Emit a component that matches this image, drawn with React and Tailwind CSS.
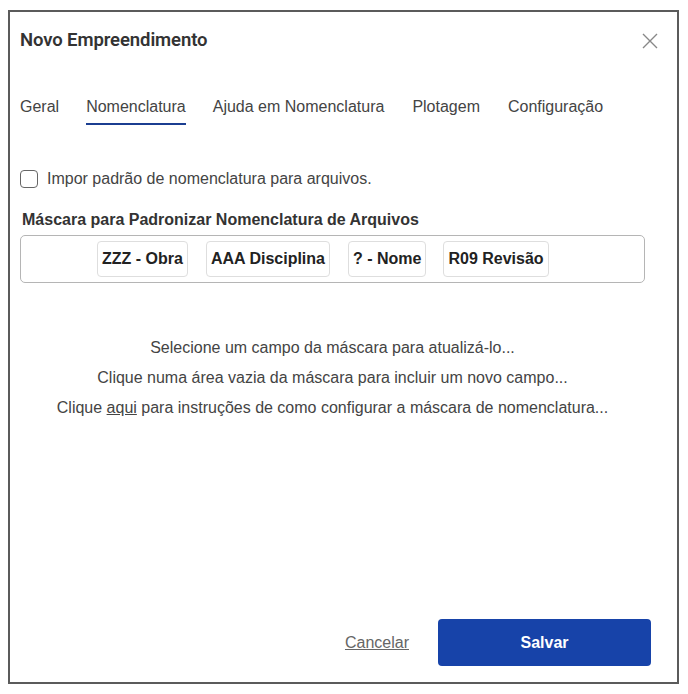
export default function App() {
  const tabs = ["Geral", "Nomenclatura", "Ajuda em Nomenclatura", "Plotagem", "Configuração"];
  const chips = [
    { label: "ZZZ - Obra", ml: "ml-[76px]" },
    { label: "AAA Disciplina", ml: "ml-[18px]" },
    { label: "? - Nome", ml: "ml-[18px]" },
    { label: "R09 Revisão", ml: "ml-[17px]" },
  ];
  return (
    <div className="w-[688px] h-[694px] bg-white pt-[10px] pl-[8px]" style={{ fontFamily: "'Liberation Sans', Arial, sans-serif" }}>
      <div className="w-[671px] h-[674px] border-2 border-[#5b5b5b] flex flex-col pl-[10px] pr-[10px] text-[#333]">
        <div className="flex items-center justify-between h-[58px]">
          <div className="text-[18.5px] text-[#333] tracking-[-0.1px]" style={{ fontFamily: "Roboto, 'Liberation Sans', sans-serif", fontWeight: 600 }}>Novo Empreendimento</div>
          <svg width="18" height="18" viewBox="0 0 18 18" className="mr-[8px]">
            <path d="M2 2 L16 16 M16 2 L2 16" stroke="#888" strokeWidth="1.4" fill="none" />
          </svg>
        </div>
        <div className="flex h-[68px] items-start pt-[28px] text-[16px] text-[#444]">
          {tabs.map((t, i) => (
            <div key={t} className={`flex flex-col ${i === 0 ? "" : i >= 3 ? "ml-[28px]" : "ml-[27px]"}`}>
              <span className="leading-[18px]">{t}</span>
              {t === "Nomenclatura" ? <div className="mt-[7px] h-[2px] bg-[#1b3e91]" /> : null}
            </div>
          ))}
        </div>
        <div className="flex items-center mt-[31px] h-[20px]">
          <div className="w-[18px] h-[18px] border-[1.5px] border-[#666] rounded-[4px]" />
          <span className="ml-[9px] text-[16px] text-[#444]">Impor padrão de nomenclatura para arquivos.</span>
        </div>
        <div className="mt-[22px] ml-[2px] text-[16px] font-bold text-[#333] leading-[18px]">Máscara para Padronizar Nomenclatura de Arquivos</div>
        <div className="mt-[6px] w-[625px] h-[48px] border border-[#b5b5b5] rounded-[5px] flex items-center">
          {chips.map((c) => (
            <div key={c.label} className={`${c.ml} h-[36px] px-[4px] flex items-center border border-[#dedede] rounded-[4px] text-[16px] font-bold text-[#222]`}>{c.label}</div>
          ))}
        </div>
        <div className="w-[625px] mt-[56px] flex flex-col items-center text-[16px] text-[#444] gap-[12px] leading-[18px]">
          <div>Selecione um campo da máscara para atualizá-lo...</div>
          <div>Clique numa área vazia da máscara para incluir um novo campo...</div>
          <div>Clique <span className="underline">aqui</span> para instruções de como configurar a máscara de nomenclatura...</div>
        </div>
        <div className="mt-auto mb-[16px] flex items-center justify-end pr-[16px]">
          <span className="text-[16px] text-[#666] underline mr-[29px]">Cancelar</span>
          <div className="w-[213px] h-[47px] bg-[#1743a9] rounded-[4px] flex items-center justify-center text-white text-[16px] font-bold">Salvar</div>
        </div>
      </div>
    </div>
  );
}
